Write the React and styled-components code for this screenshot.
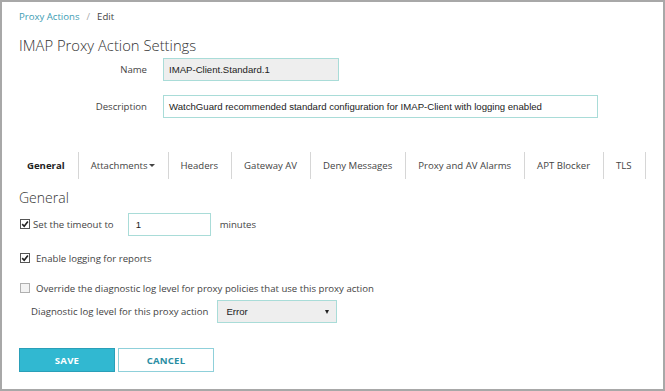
import React from 'react';
import styled, { createGlobalStyle } from 'styled-components';

const GlobalStyle = createGlobalStyle`
  html, body {
    margin: 0;
    padding: 0;
    background: #fff;
  }
  * {
    box-sizing: border-box;
  }
`;

const Page = styled.div`
  width: 665px;
  height: 391px;
  border: 2px solid #a8a8a8;
  padding: 0 17px;
  font-family: 'Open Sans', 'Noto Sans', sans-serif;
  font-size: 9.6px;
  color: #333;
  display: flex;
  flex-direction: column;
  overflow: hidden;
`;

const Breadcrumb = styled.div`
  display: flex;
  align-items: center;
  gap: 7px;
  height: 16px;
  margin-top: 6px;
  font-size: 9.6px;
  color: #444;
  a {
    color: #3d9db4;
    text-decoration: none;
  }
  .sep {
    color: #aaa;
  }
`;

const Title = styled.h1`
  margin: 11px 0 0;
  font-size: 14.8px;
  font-weight: 300;
  line-height: 20px;
  height: 20px;
  color: #333;
`;

const FormRow = styled.div`
  display: flex;
  align-items: center;
  gap: 16px;
  height: 23px;
  margin-top: ${(p) => p.top}px;
`;

const Label = styled.label`
  width: 128px;
  text-align: right;
  font-size: 9.6px;
  color: #444;
`;

const TextInput = styled.div`
  height: 23px;
  width: ${(p) => p.width}px;
  border: 1px solid #a9dcd8;
  background: ${(p) => (p.disabled ? '#eeeeee' : '#fff')};
  font-family: 'Liberation Sans', Arial, sans-serif;
  font-size: 9.6px;
  color: #222;
  display: flex;
  align-items: center;
  padding: 0 5px;
  white-space: nowrap;
  flex-shrink: 0;
`;

const Tabs = styled.div`
  display: flex;
  align-items: center;
  margin-top: 34px;
  height: 27px;
`;

const Tab = styled.div`
  height: 27px;
  display: flex;
  align-items: center;
  padding: 0 13px 0 12px;
  font-size: 9.6px;
  color: ${(p) => (p.active ? '#222' : '#444')};
  font-weight: ${(p) => (p.active ? 700 : 400)};
  border-right: 1px solid #d6d6d6;
  white-space: nowrap;
  &:first-child {
    padding-left: 8px;
  }
`;

const Caret = styled.span`
  display: inline-block;
  margin-left: 1px;
  width: 0;
  height: 0;
  border-left: 3px solid transparent;
  border-right: 3px solid transparent;
  border-top: 3.5px solid #444;
`;

const SectionTitle = styled.h2`
  margin: 10px 0 0;
  font-size: 14px;
  font-weight: 300;
  line-height: 18px;
  height: 18px;
  color: #333;
`;

const CheckRow = styled.div`
  display: flex;
  align-items: center;
  margin-top: ${(p) => p.top}px;
  font-size: 9.6px;
  color: #444;
  height: ${(p) => p.h || 16}px;
`;

const Box = styled.span`
  width: 10px;
  height: 10px;
  border: 1px solid ${(p) => (p.checked ? '#555' : '#b0b0b0')};
  background: ${(p) => (p.checked ? '#fff' : '#f3f3f3')};
  margin-left: 1px;
  margin-right: ${(p) => p.gap}px;
  display: inline-flex;
  align-items: center;
  justify-content: center;
  flex-shrink: 0;
`;

const TimeoutInput = styled(TextInput)`
  margin-left: 14px;
  margin-right: 9px;
  padding-left: 7px;
`;

const SelectRow = styled.div`
  display: flex;
  align-items: center;
  margin-top: 4px;
  height: 23px;
  padding-left: 12px;
  font-size: 9.6px;
  color: #444;
  gap: 9px;
`;

const Select = styled.div`
  width: 120px;
  height: 23px;
  border: 1px solid #a9dcd8;
  background: #eeeeee;
  display: flex;
  align-items: center;
  justify-content: space-between;
  padding: 0 7px 0 8px;
  font-family: 'Liberation Sans', Arial, sans-serif;
  font-size: 9.6px;
  color: #222;
`;

const SmallCaret = styled.span`
  width: 0;
  height: 0;
  border-left: 2.5px solid transparent;
  border-right: 2.5px solid transparent;
  border-top: 4.5px solid #222;
`;

const Buttons = styled.div`
  display: flex;
  gap: 3px;
  margin-top: 25px;
`;

const Button = styled.button`
  width: 96px;
  height: 24px;
  border: 1px solid ${(p) => (p.primary ? '#2a9fb8' : '#8fd0da')};
  background: ${(p) => (p.primary ? '#31b8d1' : '#fff')};
  color: ${(p) => (p.primary ? '#fff' : '#2a8ea3')};
  font-family: 'Open Sans', sans-serif;
  font-weight: 700;
  font-size: 9.6px;
  letter-spacing: 0.2px;
  padding: 0;
`;

const Check = () => (
  <svg width="8" height="8" viewBox="0 0 10 10">
    <path d="M1.5 5.2 L4 7.8 L8.6 1.8" fill="none" stroke="#222" strokeWidth="2" />
  </svg>
);

const tabs = [
  'General',
  'Attachments',
  'Headers',
  'Gateway AV',
  'Deny Messages',
  'Proxy and AV Alarms',
  'APT Blocker',
  'TLS',
];

export default function App() {
  return (
    <>
      <GlobalStyle />
      <Page>
        <Breadcrumb>
          <a href="#">Proxy Actions</a>
          <span className="sep">/</span>
          <span>Edit</span>
        </Breadcrumb>
        <Title>IMAP Proxy Action Settings</Title>
        <FormRow top={3}>
          <Label>Name</Label>
          <TextInput width={176} disabled>
            IMAP-Client.Standard.1
          </TextInput>
        </FormRow>
        <FormRow top={14}>
          <Label>Description</Label>
          <TextInput width={435}>
            WatchGuard recommended standard configuration for IMAP-Client with logging enabled
          </TextInput>
        </FormRow>
        <Tabs>
          {tabs.map((t, i) => (
            <Tab key={t} active={i === 0}>
              {t}
              {t === 'Attachments' && <Caret />}
            </Tab>
          ))}
        </Tabs>
        <SectionTitle>General</SectionTitle>
        <CheckRow top={5} h={24}>
          <Box checked gap={3}>
            <Check />
          </Box>
          Set the timeout to
          <TimeoutInput width={83}>1</TimeoutInput>
          minutes
        </CheckRow>
        <CheckRow top={14}>
          <Box checked gap={6}>
            <Check />
          </Box>
          Enable logging for reports
        </CheckRow>
        <CheckRow top={14}>
          <Box gap={6} />
          Override the diagnostic log level for proxy policies that use this proxy action
        </CheckRow>
        <SelectRow>
          Diagnostic log level for this proxy action
          <Select>
            Error
            <SmallCaret />
          </Select>
        </SelectRow>
        <Buttons>
          <Button primary>SAVE</Button>
          <Button>CANCEL</Button>
        </Buttons>
      </Page>
    </>
  );
}
